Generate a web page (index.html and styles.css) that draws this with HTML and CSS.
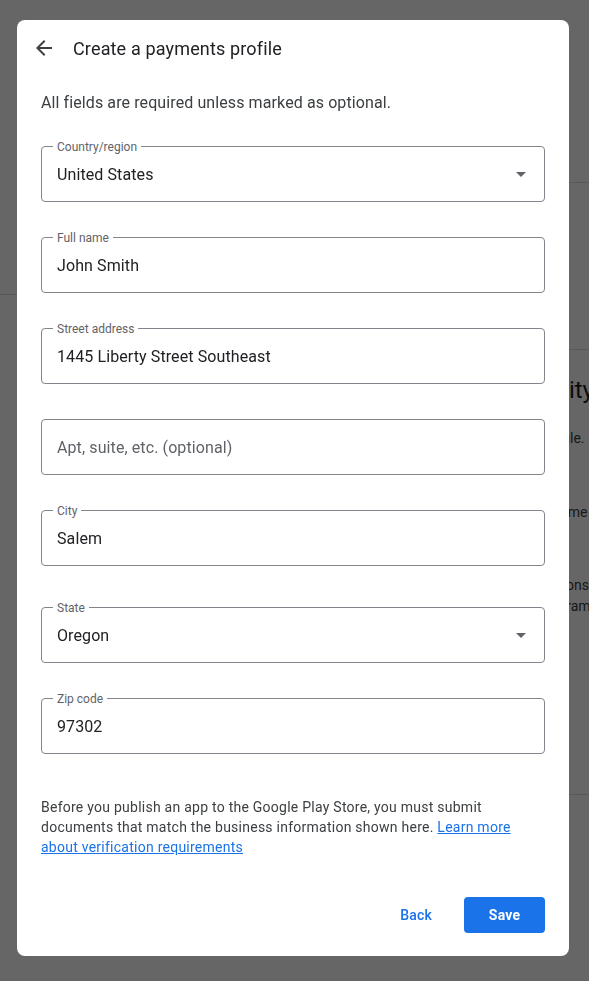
FILE: index.html
```html
<!DOCTYPE html>
<html lang="en">
<head>
<meta charset="utf-8">
<title>Create a payments profile</title>
<link rel="stylesheet" href="styles.css">
</head>
<body>
<div class="bg">
  <div class="bg-left">
    <div class="bg-block-left"></div>
  </div>
  <div class="bg-right">
    <div class="bg-block b1"></div>
    <div class="bg-block b2"></div>
    <div class="bg-section">
      <h2 class="bg-title">Identity verification</h2>
      <p class="bg-text t1">Set profile.</p>
      <p class="bg-text t2">Legal name</p>
      <p class="bg-text t3">Your responses</p>
      <p class="bg-text t4">The program</p>
    </div>
  </div>
</div>

<div class="scrim">
  <div class="dialog">
    <div class="dialog-header">
      <svg class="back-icon" viewBox="0 0 24 24" width="24" height="24"><path d="M20 11H7.83l5.59-5.59L12 4l-8 8 8 8 1.41-1.41L7.83 13H20v-2z" fill="#3c4043"/></svg>
      <h1 class="dialog-title">Create a payments profile</h1>
    </div>
    <div class="dialog-body">
      <p class="intro">All fields are required unless marked as optional.</p>
      <div class="fields">
        <div class="field">
          <span class="field-label">Country/region</span>
          <span class="field-value">United States</span>
          <svg class="drop-icon" viewBox="0 0 24 24" width="24" height="24"><path d="M7 10l5 5 5-5z" fill="#5f6368"/></svg>
        </div>
        <div class="field">
          <span class="field-label">Full name</span>
          <span class="field-value">John Smith</span>
        </div>
        <div class="field">
          <span class="field-label">Street address</span>
          <span class="field-value">1445 Liberty Street Southeast</span>
        </div>
        <div class="field">
          <span class="field-value placeholder">Apt, suite, etc. (optional)</span>
        </div>
        <div class="field">
          <span class="field-label">City</span>
          <span class="field-value">Salem</span>
        </div>
        <div class="field field-gap">
          <span class="field-label">State</span>
          <span class="field-value">Oregon</span>
          <svg class="drop-icon" viewBox="0 0 24 24" width="24" height="24"><path d="M7 10l5 5 5-5z" fill="#5f6368"/></svg>
        </div>
        <div class="field">
          <span class="field-label">Zip code</span>
          <span class="field-value">97302</span>
        </div>
      </div>
      <p class="note">Before you publish an app to the Google Play Store, you must submit documents that match the business information shown here. <a href="#" class="link">Learn more about verification requirements</a></p>
    </div>
    <div class="dialog-actions">
      <button class="btn btn-text">Back</button>
      <button class="btn btn-primary">Save</button>
    </div>
  </div>
</div>
</body>
</html>
```

FILE: styles.css
```css
html, body {
  margin: 0;
  padding: 0;
  overflow: hidden;
  background: #ffffff;
  font-family: Roboto, "Liberation Sans", Arial, sans-serif;
}

.bg {
  display: grid;
  grid-template-columns: 300px 1fr;
  height: 981px;
  width: 589px;
}

.bg-block-left {
  height: 294px;
  border-bottom: 1px solid #dadce0;
}

.bg-right {
  display: flex;
  flex-direction: column;
  min-width: 0;
  overflow: hidden;
}

.bg-block {
  border-bottom: 1px solid #dadce0;
}
.b1 { height: 182px; }
.b2 { height: 166px; }

.bg-section {
  padding-left: 215px;
  height: 444px;
  border-bottom: 1px solid #dadce0;
  white-space: nowrap;
  color: #202124;
}

.bg-title {
  margin: 24px 0 0;
  font-size: 24px;
  font-weight: 400;
  line-height: 32px;
}

.bg-text {
  margin: 0;
  font-size: 14px;
  line-height: 20px;
  color: #3c4043;
}
.t1 { margin-top: 22px; text-indent: 3px; }
.t2 { margin-top: 54px; }
.t3 { margin-top: 53px; text-indent: -8px; }
.t4 { margin-top: 1px; text-indent: -4px; }

.scrim {
  position: fixed;
  inset: 0;
  background: rgba(0, 0, 0, 0.6);
  padding: 20px 0 0 17px;
}

.dialog {
  width: 552px;
  height: 936px;
  background: #ffffff;
  border-radius: 8px;
  display: flex;
  flex-direction: column;
  box-sizing: border-box;
}

.dialog-header {
  height: 56px;
  display: flex;
  align-items: center;
  padding-left: 15px;
  gap: 17px;
}

.back-icon {
  display: block;
  flex: none;
}

.dialog-title {
  margin: 0;
  font-size: 18px;
  font-weight: 400;
  color: #202124;
  letter-spacing: 0.15px;
}

.dialog-body {
  padding: 0 24px;
  flex: 1;
}

.intro {
  margin: 15px 0 0;
  font-size: 16px;
  line-height: 24px;
  color: #3c4043;
  letter-spacing: 0.1px;
}

.fields {
  margin-top: 31px;
  display: flex;
  flex-direction: column;
  gap: 35px;
}

.field {
  position: relative;
  height: 56px;
  box-sizing: border-box;
  border: 1px solid #80868b;
  border-radius: 4px;
  display: flex;
  align-items: center;
  padding: 0 11px 0 15px;
}

.field-gap {
  margin-top: 6px;
}

.field-label {
  position: absolute;
  top: -7px;
  left: 11px;
  padding: 0 4px;
  background: #ffffff;
  font-size: 12px;
  line-height: 14px;
  color: #5f6368;
}

.field-value {
  flex: 1;
  font-size: 16px;
  color: #202124;
  letter-spacing: 0.1px;
}

.placeholder {
  color: #5f6368;
}

.drop-icon {
  display: block;
  flex: none;
}

.note {
  margin: 43px 0 0;
  font-size: 14px;
  line-height: 20px;
  color: #3c4043;
  letter-spacing: 0.25px;
}

.link {
  color: #1a73e8;
  text-decoration: underline;
}

.dialog-actions {
  display: flex;
  justify-content: flex-end;
  gap: 8px;
  padding: 0 24px 23px;
}

.btn {
  height: 36px;
  border: none;
  border-radius: 4px;
  font-family: Roboto, "Liberation Sans", Arial, sans-serif;
  font-size: 14px;
  font-weight: 500;
  padding: 0 24px;
  cursor: pointer;
  letter-spacing: 0.2px;
}

.btn-text {
  background: transparent;
  color: #1a73e8;
}

.btn-primary {
  background: #1a73e8;
  color: #ffffff;
  width: 81px;
  font-weight: 700;
}
```
